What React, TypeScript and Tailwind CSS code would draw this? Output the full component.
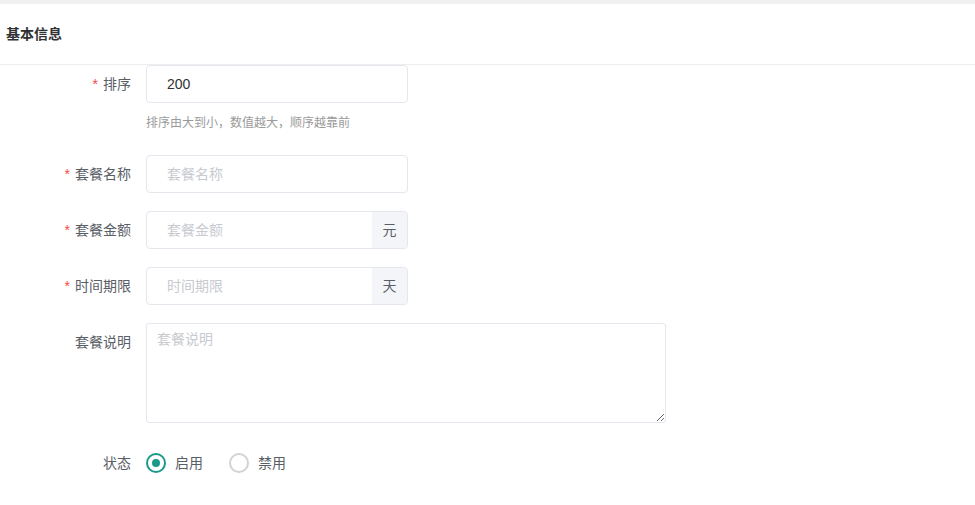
import { useState } from 'react';

const font = { fontFamily: '"Liberation Sans", "Noto Sans CJK SC", sans-serif' };

function Label({ text, required, top }: { text: string; required?: boolean; top?: boolean }) {
  return (
    <div
      className={`w-[131px] shrink-0 flex justify-end text-[14px] text-[#5a5e66] ${top ? 'pt-[9px] items-start' : 'items-center h-[38px]'}`}
    >
      {required && <span className="text-[#f5484b] mr-[5px]">*</span>}
      <span>{text}</span>
    </div>
  );
}

function TextInput({ value, placeholder, addon }: { value?: string; placeholder?: string; addon?: string }) {
  return (
    <div className="flex w-[262px] h-[38px] border border-[#e4e7ed] rounded-[4px] overflow-hidden bg-white">
      <input
        defaultValue={value}
        placeholder={placeholder}
        className="flex-1 min-w-0 pl-[20px] pr-3 text-[14px] text-[#303133] outline-none placeholder:text-[#c8cacf]"
      />
      {addon && (
        <div className="w-[35px] shrink-0 bg-[#f4f5f8] flex items-center justify-center text-[14px] text-[#5a5e66]">
          {addon}
        </div>
      )}
    </div>
  );
}

function Radio({ checked, label, onClick }: { checked: boolean; label: string; onClick: () => void }) {
  return (
    <button type="button" onClick={onClick} className="flex items-center gap-[9px] cursor-pointer">
      <span
        className={`w-[20px] h-[20px] rounded-full flex items-center justify-center border-2 ${checked ? 'border-[#1a9a8b]' : 'border-[#d0d2d6]'}`}
      >
        {checked && <span className="w-[8px] h-[8px] rounded-full bg-[#1a9a8b]" />}
      </span>
      <span className="text-[14px] text-[#5a5e66]">{label}</span>
    </button>
  );
}

export default function App() {
  const [status, setStatus] = useState<'on' | 'off'>('on');

  return (
    <div className="min-h-screen bg-white" style={font}>
      <div className="h-[4px] bg-[#f0f0f0]" />
      <div className="h-[61px] flex items-center pl-[6px] border-b border-[#eeeeee]">
        <span className="text-[14px] font-bold text-[#303133]">基本信息</span>
      </div>

      <div className="flex flex-col">
        {/* 排序 */}
        <div className="flex gap-[15px]">
          <Label text="排序" required />
          <div className="flex flex-col">
            <TextInput value="200" />
            <div className="mt-[12px] text-[12px] text-[#9a9a9a] leading-[16px]">排序由大到小，数值越大，顺序越靠前</div>
          </div>
        </div>

        <div className="flex gap-[15px] mt-[24px]">
          <Label text="套餐名称" required />
          <TextInput placeholder="套餐名称" />
        </div>

        <div className="flex gap-[15px] mt-[18px]">
          <Label text="套餐金额" required />
          <TextInput placeholder="套餐金额" addon="元" />
        </div>

        <div className="flex gap-[15px] mt-[18px]">
          <Label text="时间期限" required />
          <TextInput placeholder="时间期限" addon="天" />
        </div>

        <div className="flex gap-[15px] mt-[18px]">
          <Label text="套餐说明" top />
          <textarea
            placeholder="套餐说明"
            className="w-[520px] h-[100px] border border-[#e4e7ed] rounded-[3px] px-[10px] py-[5px] text-[14px] text-[#303133] outline-none placeholder:text-[#c8cacf]"
          />
        </div>

        <div className="flex gap-[15px] mt-[21px] items-center">
          <Label text="状态" />
          <div className="flex items-center gap-[26px]">
            <Radio checked={status === 'on'} label="启用" onClick={() => setStatus('on')} />
            <Radio checked={status === 'off'} label="禁用" onClick={() => setStatus('off')} />
          </div>
        </div>
      </div>
    </div>
  );
}
